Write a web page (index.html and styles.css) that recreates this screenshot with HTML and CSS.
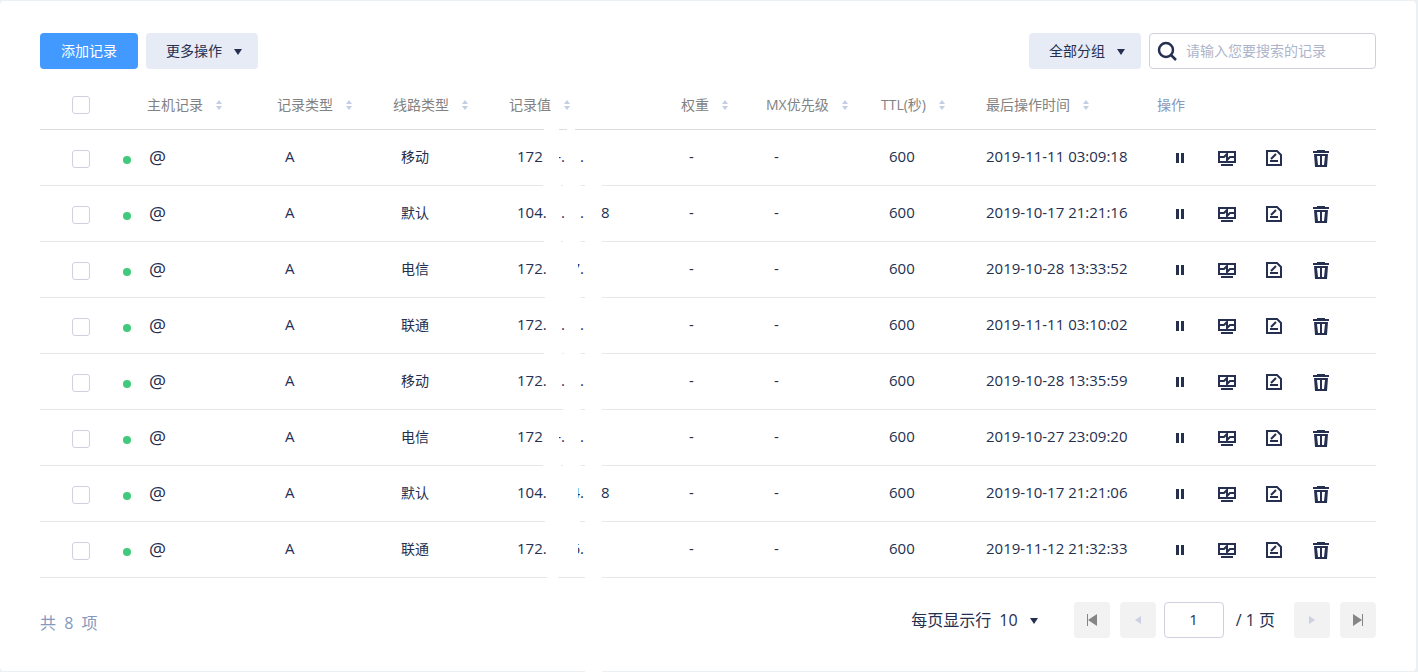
FILE: index.html
```html
<!DOCTYPE html>
<html lang="zh-CN">
<head>
<meta charset="utf-8">
<title>解析记录</title>
<link rel="stylesheet" href="styles.css">
</head>
<body>
<svg class="defs" aria-hidden="true">
  <symbol id="i-sort" viewBox="0 0 6 10"><path d="M3 0l3 4H0zM3 10l3-4H0z" fill="currentColor"/></symbol>
  <symbol id="i-caret" viewBox="0 0 8 6"><path d="M0 0h8L4 6z" fill="currentColor"/></symbol>
  <symbol id="i-pause" viewBox="0 0 18 18"><path d="M5 4h3v10H5zM10 4h3v10h-3z" fill="currentColor"/></symbol>
  <symbol id="i-monitor" viewBox="0 0 18 18"><path d="M1 3h16v10H1zM3 16h12M1 8h5l3-3v6l3-3h5" fill="none" stroke="currentColor" stroke-width="2"/></symbol>
  <symbol id="i-edit" viewBox="0 0 18 18"><path d="M2 2h10l4 4v10H2zM5 12h8M6 10l5-5" fill="none" stroke="currentColor" stroke-width="2"/></symbol>
  <symbol id="i-trash" viewBox="0 0 18 18"><path d="M5 1h8v1h4v2H1V2h4zM2 5h14l-1 13H3zM5 7l1 9h2V7zM10 7v9h2l1-9z" fill="currentColor" fill-rule="evenodd"/></symbol>
</svg>
<main class="card">
  <div class="toolbar">
    <button class="btn btn-primary" type="button">添加记录</button>
    <button class="btn btn-soft" type="button">更多操作<svg class="caret"><use href="#i-caret"/></svg></button>
    <button class="btn btn-soft push" type="button">全部分组<svg class="caret"><use href="#i-caret"/></svg></button>
    <label class="search">
      <svg class="search-icon" viewBox="0 0 20 20"><path d="M9 2a7 7 0 1 1 0 14a7 7 0 0 1 0-14zM14 14l5 5" fill="none" stroke="currentColor" stroke-width="2.5"/></svg>
      <input type="text" placeholder="请输入您要搜索的记录" aria-label="搜索记录">
    </label>
  </div>
  <table class="records">
    <colgroup><col class="c-check"><col class="c-host"><col class="c-type"><col class="c-type"><col class="c-value"><col class="c-weight"><col class="c-mx"><col class="c-ttl"><col class="c-time"><col class="c-ops"></colgroup>
    <thead><tr id="head"></tr></thead>
    <tbody id="rows"></tbody>
  </table>
  <footer class="footer">
    <p class="total">共 8 项</p>
    <button class="page-size" type="button">每页显示行 <span>10</span><svg class="caret"><use href="#i-caret"/></svg></button>
    <nav class="pager" aria-label="分页">
      <button class="page-btn" type="button" aria-label="首页"><svg viewBox="0 0 12 12"><path d="M1 0h1v12H1zM11 0v12L2 6z" fill="currentColor"/></svg></button>
      <button class="page-btn off" type="button" aria-label="上一页"><svg viewBox="0 0 12 12"><path d="M9 2v8L3 6z" fill="currentColor"/></svg></button>
      <input class="page-no" type="text" value="1" aria-label="页码">
      <span class="page-total">/ 1 页</span>
      <button class="page-btn off" type="button" aria-label="下一页"><svg viewBox="0 0 12 12"><path d="M3 2v8l6-4z" fill="currentColor"/></svg></button>
      <button class="page-btn" type="button" aria-label="末页"><svg viewBox="0 0 12 12"><path d="M10 0h1v12h-1zM1 0v12l9-6z" fill="currentColor"/></svg></button>
    </nav>
  </footer>
  <i class="mask mask-card"></i>
</main>
<script src="main.js"></script>
</body>
</html>
```
FILE: styles.css
```css
* { box-sizing: border-box; }
body {
  margin: 0;
  padding: 1px 2px 1px 0;
  background: #ebf0f5;
  color: #252f4f;
  font: 14px/20px "Open Sans", "Noto Sans CJK SC", sans-serif;
}
button, input { font: inherit; color: inherit; margin: 0; }
button { border: 0; padding: 0; background: none; cursor: pointer; }
.defs { display: none; }
.card {
  position: relative;
  min-height: 670px;
  padding: 32px 40px;
  background: #fff;
  border-radius: 4px;
}
.toolbar { display: flex; gap: 8px; }
.btn { height: 36px; padding: 0 20px; border-radius: 4px; display: flex; align-items: center; }
.btn-primary { background: #4299ff; color: #fff; padding: 0 21px; }
.btn-soft { background: #e7ebf6; padding: 0 16px 0 20px; }
.caret { width: 8px; height: 6px; margin: 1px 0 0 12px; }
.push { margin-left: auto; }
.search {
  display: flex; align-items: center; gap: 9px;
  width: 227px; height: 36px; padding: 0 7px;
  border: 1px solid #cfd1de; border-radius: 4px;
}
.search-icon { flex: none; width: 20px; height: 20px; }
.search input { flex: 1; min-width: 0; padding: 0; border: 0; outline: 0; background: none; }
.search input::placeholder { color: #adb5cb; opacity: 1; }

.records { width: 100%; margin-top: 11px; table-layout: fixed; border-collapse: separate; border-spacing: 0; }
.c-check { width: 82px; }
.c-host { width: 155px; }
.c-type { width: 116px; }
.c-value { width: 172px; }
.c-weight { width: 85px; }
.c-mx { width: 115px; }
.c-ttl { width: 105px; }
.c-time { width: 171px; }
.c-ops { width: 219px; }
th, td { padding: 0; text-align: left; font-weight: 400; white-space: nowrap; position: relative; }
th { height: 50px; border-bottom: 1px solid #dadbdd; color: #828282; }
td { height: 56px; border-bottom: 1px solid #e5e7ea; padding: 0 0 2px 8px; }
th.host { padding-left: 25px; }
th.ops { color: #8598bd; }
td.check, th.check { padding: 0 0 0 32px; }
td.check { padding-top: 3px; }
td.host { padding-left: 1px; }
td.latin { font-size: 15px; padding-bottom: 4px; }
td.time { padding-left: 0; }
td.ops { padding: 1px 0 0 14px; }
.sort { width: 6px; height: 10px; margin-left: 13px; color: #c3cee3; }
.tick {
  appearance: none; display: block; width: 18px; height: 18px; margin: 0;
  border: 1px solid #cfd1de; border-radius: 3px; background: #fff;
}
.tick:checked { background: #4299ff; }
.host-name { display: flex; align-items: center; gap: 18px; font-size: 19px; }
.dot { width: 8px; height: 8px; margin-top: 6px; border-radius: 50%; background: #41c97c; }
.value { display: grid; grid-template-columns: 42px 19px 23px auto; height: 20px; }
.cut { position: relative; display: flex; justify-content: flex-end; width: 6px; }
.cut::before { content: ""; position: absolute; top: 0; right: 100%; width: 8px; height: 20px; background: #fff; z-index: 1; }
.actions { display: flex; gap: 29px; }
.actions svg { display: block; width: 18px; height: 18px; }

.mask { position: absolute; bottom: -1px; height: 1px; background: #fff; }
.mask-card { left: 585px; width: 17px; height: 2px; }

.footer { display: flex; align-items: center; padding-top: 24px; font-size: 16px; }
.total { margin: 6px auto 0 0; color: #8598bd; word-spacing: 4px; }
.page-size { display: flex; align-items: center; margin-right: 36px; }
.page-size span { margin-left: 8px; }
.pager { display: flex; align-items: center; gap: 10px; }
.page-btn { width: 36px; height: 36px; display: grid; place-items: center; border-radius: 4px; background: #f2f2f2; color: #858585; }
.page-btn svg { width: 12px; height: 12px; }
.page-btn.off { color: #cbd1e0; }
.page-no { width: 60px; height: 36px; margin-left: -2px; padding: 0 0 2px; border: 1px solid #cfd1de; border-radius: 4px; text-align: center; font-size: 15px; }
.page-total { margin-right: 9px; padding-left: 2px; }
```
FILE: main.js
```js
const heads = [['host', '主机记录'], ['', '记录类型'], ['', '线路类型'], ['masked', '记录值'], ['', '权重'], ['', 'MX优先级'], ['', 'TTL(秒)'], ['', '最后操作时间'], ['ops', '操作']];
const rows = [
  ['移动', ['172', '-.', '.', ''], '2019-11-11 03:09:18', [[34, 18], [54, 18]]],
  ['默认', ['104.', '.', '.', '8'], '2019-10-17 21:21:16', [[35, 17], [54, 18]]],
  ['电信', ['172.', '', '7.', ''], '2019-10-28 13:33:52', [[36, 36]]],
  ['联通', ['172.', '.', '.', ''], '2019-11-11 03:10:02', [[35, 18], [55, 17]]],
  ['移动', ['172.', '.', '.', ''], '2019-10-28 13:35:59', [[54, 18]]],
  ['电信', ['172', '-.', '.', ''], '2019-10-27 23:09:20', [[34, 18], [54, 18]]],
  ['默认', ['104.', '', '4.', '8'], '2019-10-17 21:21:06', [[36, 35]]],
  ['联通', ['172.', '', '6.', ''], '2019-11-12 21:32:33', [[38, 11]]]
];
const mask = list => list.map(([x, w]) => `<i class="mask" style="left:${x}px;width:${w}px"></i>`).join('');
const cut = text => `<span${text.length > 1 ? ' class="cut"' : ' class="cut"'}>${text}</span>`;
const tick = label => `<input class="tick" type="checkbox" aria-label="${label}">`;
const icon = (id, label) => `<button type="button" aria-label="${label}"><svg><use href="#i-${id}"/></svg></button>`;

document.getElementById('head').innerHTML = `<th class="check">${tick('全选')}</th>` + heads.map(([c, t]) =>
  `<th class="${c}">${t}${c === 'ops' ? '' : '<svg class="sort"><use href="#i-sort"/></svg>'}${c === 'masked' ? mask([[35, 15], [58, 8]]) : ''}</th>`).join('');

document.getElementById('rows').innerHTML = rows.map(([line, v, time, gaps]) => `<tr>
  <td class="check">${tick('选择')}</td>
  <td class="host"><div class="host-name"><span class="dot"></span>@</div></td>
  <td class="latin">A</td>
  <td>${line}</td>
  <td class="latin"><div class="value"><span>${v[0]}</span>${cut(v[1])}${cut(v[2])}<span>${v[3]}</span></div>${mask([...gaps, [76, 17]])}</td>
  <td class="latin">-</td>
  <td class="latin">-</td>
  <td class="latin">600</td>
  <td class="latin time">${time}</td>
  <td class="ops"><div class="actions">${icon('pause', '暂停')}${icon('monitor', '监控')}${icon('edit', '编辑')}${icon('trash', '删除')}</div></td>
</tr>`).join('');
```
